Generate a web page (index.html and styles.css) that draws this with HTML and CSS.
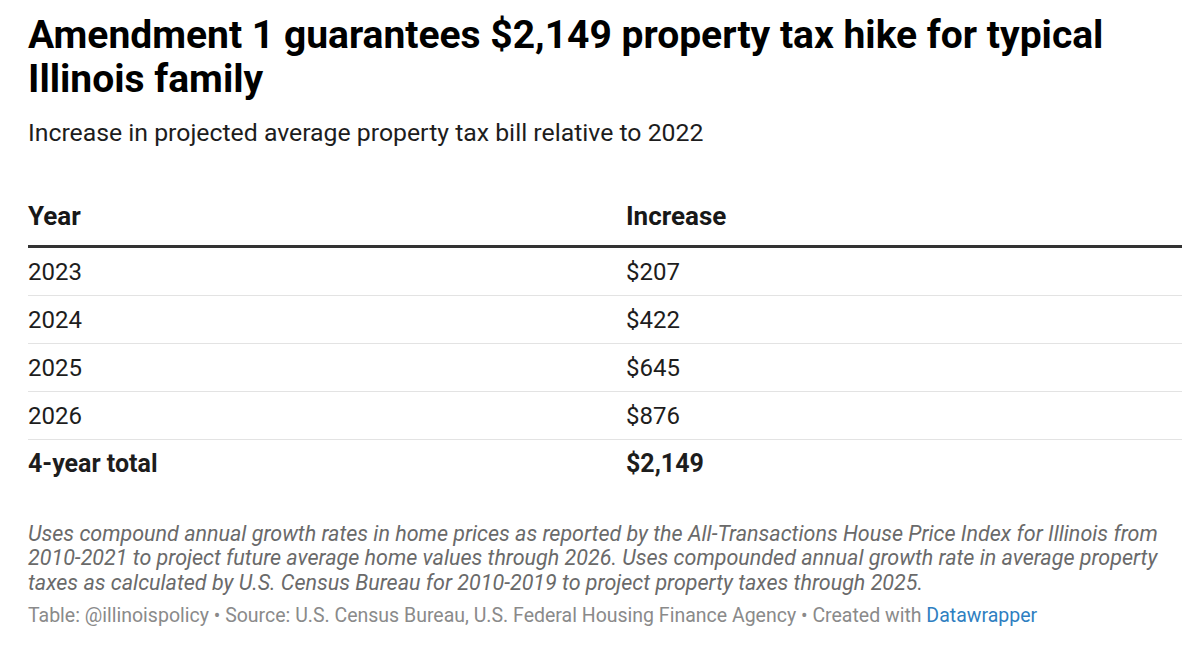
FILE: index.html
```html
<!DOCTYPE html>
<html lang="en">
<head>
<meta charset="utf-8">
<title>Amendment 1 guarantees $2,149 property tax hike</title>
<link rel="stylesheet" href="styles.css">
</head>
<body>
<div class="chart">
  <h1 class="title">Amendment 1 guarantees $2,149 property tax hike for typical Illinois family</h1>
  <p class="subtitle">Increase in projected average property tax bill relative to 2022</p>
  <table class="data">
    <thead>
      <tr><th class="c-year">Year</th><th>Increase</th></tr>
    </thead>
    <tbody>
      <tr><td>2023</td><td>$207</td></tr>
      <tr><td>2024</td><td>$422</td></tr>
      <tr><td>2025</td><td>$645</td></tr>
      <tr><td>2026</td><td>$876</td></tr>
      <tr class="total"><td>4-year total</td><td>$2,149</td></tr>
    </tbody>
  </table>
  <p class="notes">Uses compound annual growth rates in home prices as reported by the All-Transactions House Price Index for Illinois from 2010-2021 to project future average home values through 2026. Uses compounded annual growth rate in average property taxes as calculated by U.S. Census Bureau for 2010-2019 to project property taxes through 2025.</p>
  <p class="footer">Table: @illinoispolicy • Source: U.S. Census Bureau, U.S. Federal Housing Finance Agency • Created with <a class="dw" href="#">Datawrapper</a></p>
</div>
</body>
</html>
```
FILE: styles.css
```css
html, body {
  margin: 0;
  padding: 0;
  background: #ffffff;
}
body {
  font-family: Roboto, "Liberation Sans", sans-serif;
  color: #1d1d1d;
}
.chart {
  width: 1154px;
  padding: 13px 0 0 28px;
}
.title {
  margin: 0;
  font-size: 39px;
  line-height: 44px;
  font-weight: 700;
  color: #000;
}
.subtitle {
  margin: 18px 0 0;
  font-size: 24.8px;
  line-height: 28px;
  color: #1d1d1d;
}
.data {
  width: 100%;
  margin-top: 39px;
  border-collapse: collapse;
  font-size: 24px;
  line-height: 28px;
}
.data th {
  text-align: left;
  font-size: 26px;
  font-weight: 700;
  padding: 16px 0 15px;
  border-bottom: 3px solid #333;
  color: #181818;
}
.data th.c-year {
  width: 598px;
}
.data td {
  padding: 10px 0 9px;
  border-bottom: 1px solid #e3e3e3;
}
.data tr.total td {
  font-size: 25px;
  font-weight: 700;
  border-bottom: none;
}
.notes {
  margin: 34.5px 0 0;
  font-size: 21.5px;
  line-height: 24.5px;
  font-style: italic;
  color: #6a6a6a;
}
.footer {
  margin: 10px 0 0;
  font-size: 19.5px;
  line-height: 22px;
  color: #8a8a8a;
}
.dw {
  color: #2f7fc1;
  text-decoration: none;
}
```
